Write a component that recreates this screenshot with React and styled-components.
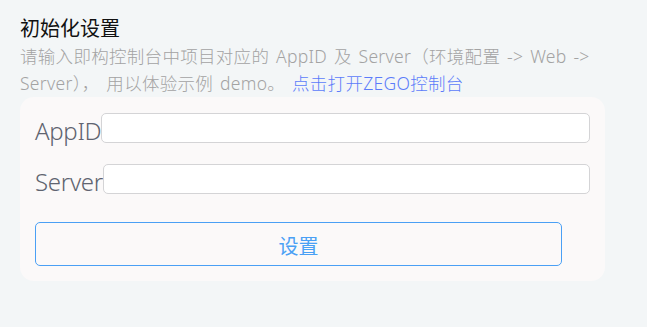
import React from "react"
import styled, { createGlobalStyle } from "styled-components"

const GlobalStyle = createGlobalStyle`
  html, body {
    margin: 0;
    padding: 0;
    background: #f3f6f7;
  }
  body {
    font-family: "Noto Sans", "Noto Sans CJK SC", sans-serif;
  }
`

const Page = styled.div`
  width: 585px;
  padding: 14px 20px 0;
`

const Title = styled.h3`
  margin: 0;
  font-size: 20px;
  line-height: 29px;
  font-weight: 400;
  color: #111;
`

const Desc = styled.p`
  margin: 0;
  font-size: 17.5px;
  line-height: 27px;
  font-weight: 300;
  word-spacing: 2px;
  letter-spacing: 0.3px;
  color: #a3a3a3;

  a {
    color: #5c7cfa;
    text-decoration: none;
    word-spacing: 0;
  }
`

const Card = styled.form`
  margin-top: 0;
  background: #fbf9f9;
  border-radius: 14px;
  padding: 16px 15px 15px;
  display: flex;
  flex-direction: column;
`

const Row = styled.label`
  display: flex;
  align-items: flex-start;
  height: 30px;
  margin-bottom: ${props => props.$gap || 21}px;
`

const FieldName = styled.span`
  font-size: 24px;
  line-height: 30px;
  padding-top: 3px;
  font-weight: 300;
  letter-spacing: -0.3px;
  color: #5f6470;
  white-space: nowrap;
`

const Input = styled.input`
  flex: 1;
  height: 30px;
  box-sizing: border-box;
  border: 1px solid #d4d4d6;
  border-radius: 5px;
  background: #fff;
  outline: none;
  margin: 0;
`

const Button = styled.button`
  width: 527px;
  height: 44px;
  margin-top: 7px;
  padding-top: 3px;
  box-sizing: border-box;
  border: 1px solid #4aa0f5;
  border-radius: 5px;
  background: transparent;
  color: #4aa0f5;
  font-family: "Noto Sans CJK SC", sans-serif;
  font-size: 20px;
  cursor: pointer;
`

export default function App() {
  return (
    <>
      <GlobalStyle />
      <Page>
        <Title>初始化设置</Title>
        <Desc>
          请输入即构控制台中项目对应的 AppID 及 Server（环境配置 -&gt; Web -&gt;
          Server）， 用以体验示例 demo。 <a href="#console">点击打开ZEGO控制台</a>
        </Desc>
        <Card onSubmit={e => e.preventDefault()}>
          <Row>
            <FieldName>AppID</FieldName>
            <Input type="text" />
          </Row>
          <Row>
            <FieldName>Server</FieldName>
            <Input type="text" />
          </Row>
          <Button type="submit">设置</Button>
        </Card>
      </Page>
    </>
  )
}
